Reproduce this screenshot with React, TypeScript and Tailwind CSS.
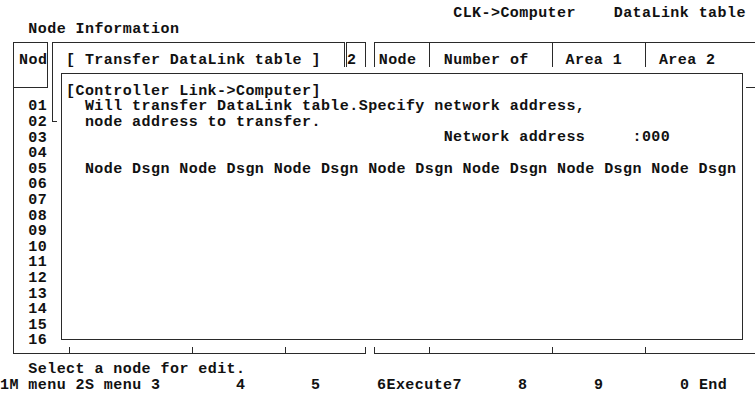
import React from 'react';

// text-mode screen: 80 cols x 25 rows, one cell = 9.44px x 15.6px
const Row: React.FC<{ text?: string; className?: string }> = ({ text = '', className = '' }) => (
  <div className={`h-[15.6px] leading-[15.6px] whitespace-pre ${className}`}>{text}</div>
);

const nodes = ['01', '02', '03', '04', '05', '06', '07', '08', '09', '10', '11', '12', '13', '14', '15', '16'];

const pad = (n: number) => ' '.repeat(n);

const App: React.FC = () => {
  return (
    <div className="relative w-[755px] h-[396px] overflow-hidden bg-white pt-[6.2px] text-[15px] tracking-[0.44px] font-bold text-[#111] [font-family:'Liberation_Mono',monospace]">
      <Row text={pad(48) + 'CLK->Computer    DataLink table'} />
      <Row text={pad(3) + 'Node Information'} />

      {/* base tables */}
      <div className="mt-[4.6px] flex">
        <div className="ml-[13px] w-[371px] border border-[#2a2a2a]">
          <div className="h-[45px] flex border-b border-[#2a2a2a]">
            <div className="w-[34px] border-r border-[#2a2a2a] pt-[10px] pl-[5px]">
              <Row text="Nod" />
            </div>
            <div className="w-[299px] border-r border-[#2a2a2a]" />
            <div className="flex-1 pt-[10px]">
              <Row text="2" />
            </div>
          </div>
          <div className="h-[265px] flex">
            <div className="w-[56px] border-r border-[#2a2a2a] pt-[11.5px] pl-[14.3px]">
              {nodes.map(n => (
                <Row key={n} text={n} />
              ))}
            </div>
            <div className="w-[123px] border-r border-[#2a2a2a]" />
            <div className="w-[93px] border-r border-[#2a2a2a]" />
            <div className="flex-1" />
          </div>
        </div>

        <div className="ml-[8px] w-[400px] border-y border-l border-[#2a2a2a]">
          <div className="h-[45px] flex border-b border-[#2a2a2a]">
            <div className="w-[55px] border-r border-[#2a2a2a] pt-[10px] pl-[3.5px]">
              <Row text="Node" />
            </div>
            <div className="w-[123px] border-r border-[#2a2a2a] pt-[10px] pl-[13.6px]">
              <Row text="Number of" />
            </div>
            <div className="w-[93px] border-r border-[#2a2a2a] pt-[10px] pl-[12.3px]">
              <Row text="Area 1" />
            </div>
            <div className="flex-1 pt-[10px] pl-[12.7px]">
              <Row text="Area 2" />
            </div>
          </div>
          <div className="h-[265px] flex">
            <div className="w-[55px] border-r border-[#2a2a2a]" />
            <div className="w-[123px] border-r border-[#2a2a2a]" />
            <div className="w-[93px] border-r border-[#2a2a2a]" />
            <div className="flex-1" />
          </div>
        </div>
      </div>

      <div className="mt-[8px]">
        <Row text={pad(3) + 'Select a node for edit.'} />
        <div className="flex h-[15.6px] leading-[15.6px] whitespace-pre">
          <span className="w-[236px] shrink-0">1M menu 2S menu 3</span>
          <span className="w-[75px] shrink-0">4</span>
          <span className="w-[66px] shrink-0">5</span>
          <span className="w-[141px] shrink-0">6Execute7</span>
          <span className="w-[76px] shrink-0">8</span>
          <span className="w-[86px] shrink-0">9</span>
          <span>0 End</span>
        </div>
      </div>

      {/* pop-up: Transfer DataLink table */}
      <div className="absolute left-[48px] top-[35px] w-[298px] h-[94px] bg-white">
        <div className="ml-[4px] mt-[7px] w-[293px] h-[80px] border border-[#2a2a2a] pt-[10px] pl-[13px]">
          <Row text="[ Transfer DataLink table ]" />
        </div>
      </div>

      {/* pop-up: Controller Link->Computer */}
      <div className="absolute left-[57px] top-[67px] w-[689px] h-[280px] bg-white">
        <div className="ml-[4px] mt-[6px] w-[682px] h-[267px] border border-[#2a2a2a] pt-[9.6px] pl-[4px]">
          <Row text="[Controller Link->Computer]" />
          <Row text="  Will transfer DataLink table.Specify network address," />
          <Row text="  node address to transfer." />
          <Row text={pad(40) + 'Network address     :000'} />
          <Row />
          <Row text={'  ' + Array(7).fill('Node Dsgn').join(' ')} />
        </div>
      </div>
    </div>
  );
};

export default App;
